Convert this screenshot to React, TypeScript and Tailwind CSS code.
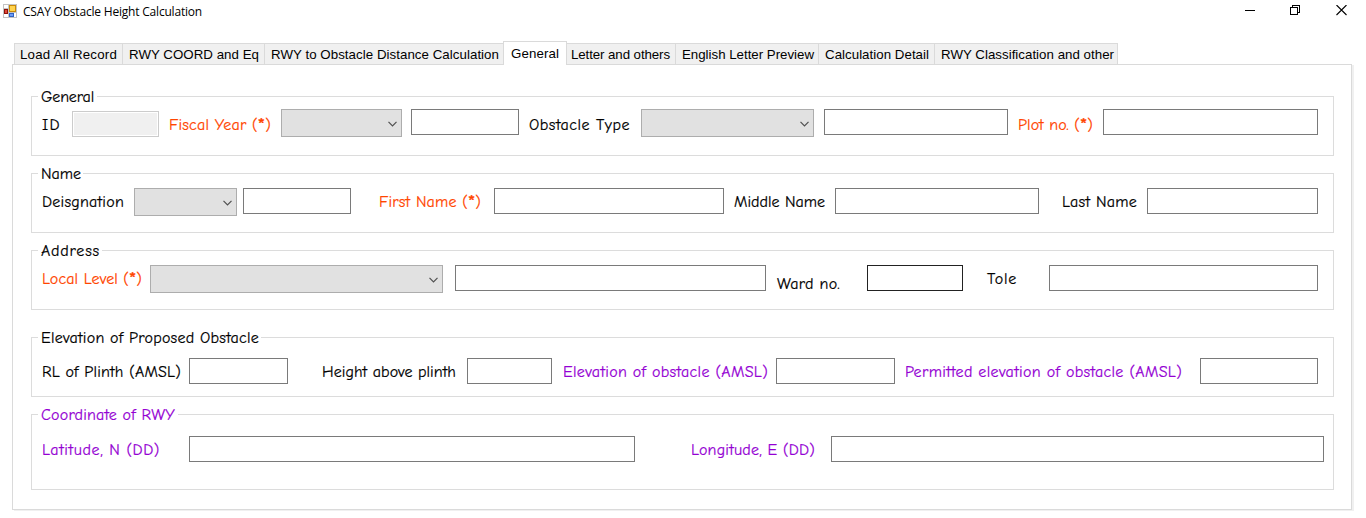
import { useLayoutEffect, useRef, useState, type ReactNode } from "react";

/** Single-line text whose tracking is adjusted so that it spans `width` pixels. */
function FitText({ width, children }: { width: number; children: ReactNode }) {
  const ref = useRef<HTMLSpanElement>(null);
  const [spacing, setSpacing] = useState(0);
  useLayoutEffect(() => {
    const el = ref.current;
    if (!el) return;
    const count = (el.textContent ?? "").length;
    setSpacing((width - el.getBoundingClientRect().width) / count);
  }, [width]);
  return (
    <span ref={ref} className="inline-block whitespace-nowrap" style={{ letterSpacing: spacing }}>
      {children}
    </span>
  );
}

const comic = "font-['Comic_Sans_MS','Comic_Neue','Open_Sans',sans-serif] [-webkit-text-stroke:0.2px]";

function Label({
  text,
  fit,
  className,
  required = false,
}: {
  text: string;
  fit: number;
  className: string;
  required?: boolean;
}) {
  return (
    <label className={`shrink-0 text-base leading-5 ${required ? "text-[#ff4500]" : ""} ${className}`}>
      <FitText width={fit}>
        {text}
        {required && (
          <>
            {" ("}
            <b className="text-[19px] leading-none">*</b>
            {")"}
          </>
        )}
      </FitText>
    </label>
  );
}

function TextBox({ className }: { className: string }) {
  return <input className={`h-[26px] shrink-0 border outline-none ${className}`} />;
}

function Combo({ className }: { className: string }) {
  return (
    <div
      className={`flex h-7 shrink-0 items-center justify-end border border-[#adadad] bg-[#e1e1e1] pr-1 ${className}`}
    >
      <svg width="9" height="6" viewBox="0 0 9 6" fill="none" stroke="#505050" strokeWidth="1.2" className="mt-px">
        <path d="M0.5 0.8 L4.5 4.8 L8.5 0.8" />
      </svg>
    </div>
  );
}

function Group({
  title,
  fit,
  className,
  legendClass,
  children,
}: {
  title: string;
  fit: number;
  className: string;
  legendClass: string;
  children: ReactNode;
}) {
  return (
    <section className={`w-[1303px] border border-[#dcdcdc] ${className}`}>
      <h2 className={`-mb-px -mt-2.5 ml-1.5 h-5 bg-white pl-[3px] text-base leading-5 ${legendClass}`}>
        <FitText width={fit}>{title}</FitText>
      </h2>
      {children}
    </section>
  );
}

const tabs = [
  { name: "Load All Record", fit: 97, box: "w-[108px] pl-[5px]" },
  { name: "RWY COORD and Eq", fit: 130, box: "w-[142px] pl-1.5" },
  { name: "RWY to Obstacle Distance Calculation", fit: 228, box: "w-[239px] pl-1.5" },
  { name: "General", fit: 48, box: "w-16 pl-[7px]", active: true },
  { name: "Letter and others", fit: 99, box: "w-[109px] -ml-px pl-1" },
  { name: "English Letter Preview", fit: 132, box: "w-[143px] pl-1.5" },
  { name: "Calculation Detail", fit: 104, box: "w-[116px] pl-1.5" },
  { name: "RWY Classification and other", fit: 173, box: "w-[184px] border-r pl-1.5" },
];

function TitleBar() {
  return (
    <header className="flex h-[41px] items-start pl-[3px]">
      <svg width="14" height="14" viewBox="0 0 14 14" className="mt-1" shapeRendering="crispEdges">
        <rect width="14" height="14" fill="#c3c3c3" />
        <rect x="1" y="1" width="4" height="3" fill="#fff" />
        <rect x="1" y="10" width="4" height="3" fill="#fff" />
        <rect x="1" y="5" width="4" height="5" fill="#8e1309" />
        <rect x="2" y="6" width="2" height="3" fill="#e0473a" />
        <rect x="6" y="1" width="7" height="7" fill="#c98a08" />
        <rect x="7" y="2" width="5" height="5" fill="#ffd34e" />
        <rect x="6" y="9" width="5" height="4" fill="#2f61c4" />
        <rect x="7" y="10" width="3" height="2" fill="#6f9df5" />
        <rect x="11" y="9" width="2" height="4" fill="#fff" />
      </svg>
      <h1 className="ml-1.5 mt-1 font-['Segoe_UI','Open_Sans',sans-serif] text-xs leading-4">
        <FitText width={179}>CSAY Obstacle Height Calculation</FitText>
      </h1>
      <div className="ml-auto mr-[19px] mt-[5px] flex gap-[35px]">
        <svg width="11" height="11" viewBox="0 0 11 11" shapeRendering="crispEdges">
          <rect x="0.5" y="5" width="10" height="1" />
        </svg>
        <svg width="11" height="11" viewBox="0 0 11 11" fill="none" stroke="#000" shapeRendering="crispEdges">
          <path d="M0.5 2.5H7.5V9.5H0.5Z M2.5 2V0.5H9.5V7.5H8" />
        </svg>
        <svg width="11" height="11" viewBox="0 0 11 11" fill="none" stroke="#000" strokeWidth="1.1">
          <path d="M0.5 0L10.5 10M10.5 0L0.5 10" />
        </svg>
      </div>
    </header>
  );
}

export default function App() {
  return (
    <div className="h-[518px] w-[1366px] overflow-hidden bg-white text-black">
      <TitleBar />

      <nav className="relative z-10 -mb-px flex h-6 items-start pl-3.5 font-['Liberation_Sans',Arial,sans-serif] text-[13.3px]">
        {tabs.map((t) => (
          <button
            key={t.name}
            className={`block shrink-0 border-l border-t border-[#dadada] text-left leading-4 ${t.box} ${
              t.active ? "relative z-10 h-6 border-r bg-white pt-px" : "mt-0.5 h-[21px] bg-[#f0f0f0] pt-0.5"
            }`}
          >
            <FitText width={t.fit}>{t.name}</FitText>
          </button>
        ))}
      </nav>

      <main
        className={`ml-3 flex h-[446px] w-[1340px] flex-col border border-[#dadada] pl-[18px] pt-[31px] shadow-[2px_1px_0_0_#f0f0f0] ${comic}`}
      >
        <Group title="General" fit={53} className="h-[60px]" legendClass="w-[59px]">
          <div className="mt-[3px] flex items-start pl-2.5">
            <Label text="ID" fit={19} className="mt-1.5 w-[30px]" />
            <TextBox className="mt-0.5 w-[87px] border-[#cccccc] bg-[#f0f0f0] shadow-[inset_0_0_0_1px_#fff]" />
            <Label text="Fiscal Year" required fit={102} className="ml-2.5 mt-1.5 w-28" />
            <Combo className="w-[121px]" />
            <TextBox className="ml-[9px] w-[108px] border-[#7a7a7a]" />
            <Label text="Obstacle Type" fit={101} className="ml-2.5 mt-1.5 w-28" />
            <Combo className="w-[173px]" />
            <TextBox className="ml-2.5 w-[184px] border-[#7a7a7a]" />
            <Label text="Plot no." required fit={75} className="ml-2.5 mt-1.5 w-[85px]" />
            <TextBox className="w-[215px] border-[#7a7a7a]" />
          </div>
        </Group>

        <Group title="Name" fit={40} className="mt-[17px] h-[60px]" legendClass="w-[45px]">
          <div className="mt-[5px] flex items-start pl-2.5">
            <Label text="Deisgnation" fit={82} className="mt-1 w-[92px]" />
            <Combo className="w-[103px]" />
            <TextBox className="ml-1.5 w-[108px] border-[#7a7a7a]" />
            <Label text="First Name" required fit={102} className="ml-7 mt-1 w-[115px]" />
            <TextBox className="w-[230px] border-[#7a7a7a]" />
            <Label text="Middle Name" fit={91} className="ml-2.5 mt-1 w-[101px]" />
            <TextBox className="w-[204px] border-[#7a7a7a]" />
            <Label text="Last Name" fit={75} className="ml-[23px] mt-1 w-[85px]" />
            <TextBox className="w-[171px] border-[#7a7a7a]" />
          </div>
        </Group>

        <Group title="Address" fit={59} className="mt-[17px] h-[60px]" legendClass="w-16">
          <div className="mt-[5px] flex items-start pl-2.5">
            <Label text="Local Level" required fit={100} className="mt-1 w-[108px]" />
            <Combo className="w-[293px]" />
            <TextBox className="ml-3 w-[311px] border-[#7a7a7a]" />
            <Label text="Ward no." fit={63} className="ml-[11px] mt-[9px] w-[90px]" />
            <TextBox className="w-24 border-[#222222]" />
            <Label text="Tole" fit={30} className="ml-6 mt-1 w-[62px]" />
            <TextBox className="w-[269px] border-[#7a7a7a]" />
          </div>
        </Group>

        <Group title="Elevation of Proposed Obstacle" fit={218} className="mt-[27px] h-[60px]" legendClass="w-[223px]">
          <div className="mt-[11px] flex items-start pl-2.5">
            <Label text="RL of Plinth (AMSL)" fit={139} className="mt-1 w-[147px]" />
            <TextBox className="w-[99px] border-[#7a7a7a]" />
            <Label text="Height above plinth" fit={134} className="ml-[34px] mt-1 w-[145px]" />
            <TextBox className="w-[85px] border-[#7a7a7a]" />
            <Label
              text="Elevation of obstacle (AMSL)"
              fit={205}
              className="ml-[11px] mt-1 w-[213px] text-[#9400d3]"
            />
            <TextBox className="w-[119px] border-[#7a7a7a]" />
            <Label
              text="Permitted elevation of obstacle (AMSL)"
              fit={277}
              className="ml-2.5 mt-1 w-[295px] text-[#9400d3]"
            />
            <TextBox className="w-[118px] border-[#7a7a7a]" />
          </div>
        </Group>

        <Group
          title="Coordinate of RWY"
          fit={134}
          className="mt-[17px] h-[76px]"
          legendClass="w-[140px] text-[#9400d3]"
        >
          <div className="mt-3 flex items-start pl-2.5">
            <Label text="Latitude, N (DD)" fit={118} className="mt-1 w-[147px] text-[#9400d3]" />
            <TextBox className="w-[446px] border-[#7a7a7a]" />
            <Label text="Longitude, E (DD)" fit={124} className="ml-14 mt-1 w-[140px] text-[#9400d3]" />
            <TextBox className="w-[493px] border-[#7a7a7a]" />
          </div>
        </Group>
      </main>
    </div>
  );
}
